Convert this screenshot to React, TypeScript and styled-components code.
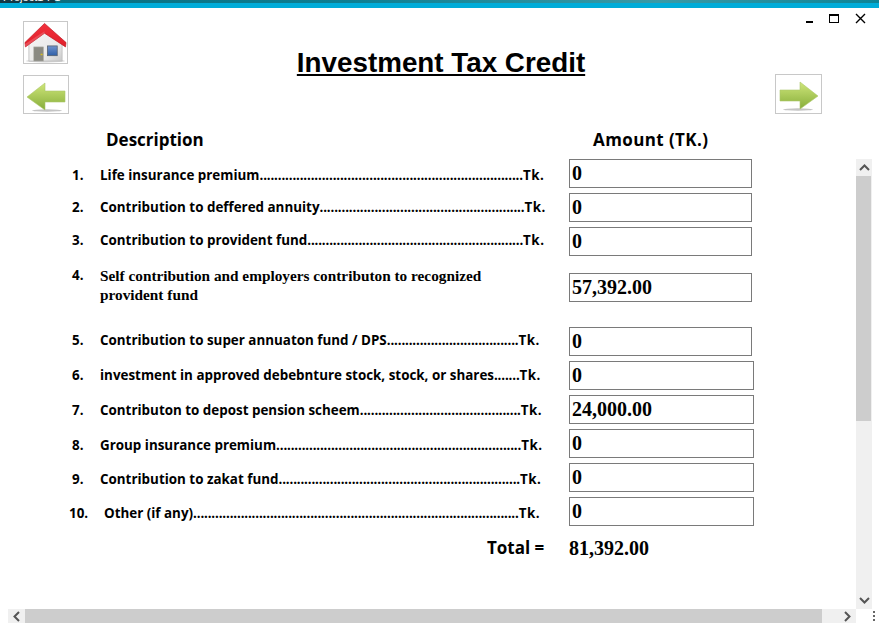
import React from "react";
import styled, { createGlobalStyle } from "styled-components";

interface IRow {
  no: string;
  label: string;
  dots: number;
  value: string;
  shift?: number;
  gap?: number;
  wide?: boolean;
}

const rows: IRow[] = [
  { no: "1.", label: "Life insurance premium", dots: 72, value: "0", shift: 2 },
  { no: "2.", label: "Contribution to deffered annuity", dots: 56, value: "0", shift: 0 },
  { no: "3.", label: "Contribution to provident fund", dots: 59, value: "0", shift: -1 },
  { no: "4.", label: "", dots: 0, value: "57,392.00", gap: 17, shift: -11.5 },
  { no: "5.", label: "Contribution to super annuaton fund / DPS", dots: 36, value: "0", gap: 25, shift: -1 },
  { no: "6.", label: "investment in approved debebnture stock, stock, or shares", dots: 7, value: "0", wide: true, shift: 0 },
  { no: "7.", label: "Contributon to depost pension scheem", dots: 44, value: "24,000.00", wide: true, shift: 1 },
  { no: "8.", label: "Group insurance premium", dots: 67, value: "0", wide: true, shift: 2 },
  { no: "9.", label: "Contribution to zakat fund", dots: 66, value: "0", wide: true, shift: 2 },
  { no: "10.", label: "Other (if any)", dots: 89, value: "0", wide: true, shift: 2 },
];

function HomeIcon() {
  return (
    <svg width="44" height="41" viewBox="0 0 44 41">
      <defs>
        <linearGradient id="wall" x1="0" y1="0" x2="1" y2="1">
          <stop offset="0" stopColor="#f6f6f6" />
          <stop offset="0.7" stopColor="#e8e8e8" />
          <stop offset="1" stopColor="#c8c8c8" />
        </linearGradient>
        <linearGradient id="roof" x1="0" y1="0" x2="0" y2="1">
          <stop offset="0" stopColor="#f2303c" />
          <stop offset="1" stopColor="#e0202a" />
        </linearGradient>
        <linearGradient id="pane" x1="0" y1="0" x2="0" y2="1">
          <stop offset="0" stopColor="#6f93cc" />
          <stop offset="1" stopColor="#2f5fa8" />
        </linearGradient>
      </defs>
      <ellipse cx="22" cy="39.5" rx="20" ry="1.4" fill="#d4d4d4" />
      <path d="M5 20 L21 8 L39 21 V39.5 H5 Z" fill="url(#wall)" stroke="#bdbdbd" strokeWidth="0.8" />
      <path d="M1 20.5 L21 1 L43 20.5 L42.5 25 L21 11 L1.5 25 Z" fill="url(#roof)" stroke="#bf1822" strokeWidth="0.7" />
      <path d="M1.5 25 L21 11 L21 9 L1 22 Z" fill="#f27c84" opacity="0.45" />
      <rect x="10" y="25" width="10" height="14.5" fill="#8a8a82" stroke="#b4b4ae" strokeWidth="0.6" />
      <rect x="17" y="32" width="2" height="1.5" fill="#d8c020" />
      <rect x="24" y="24" width="10" height="10" fill="url(#pane)" stroke="#55606e" strokeWidth="0.8" />
    </svg>
  );
}

function ArrowIcon({ flip }: { flip?: boolean }) {
  const id = flip ? "arrowR" : "arrowL";
  return (
    <svg width="40" height="34" viewBox="0 0 40 34">
      <defs>
        <linearGradient id={id} x1="0" y1="0" x2="0" y2="1">
          <stop offset="0" stopColor="#cfe67a" />
          <stop offset="1" stopColor="#86ad3a" />
        </linearGradient>
      </defs>
      <g transform={flip ? "matrix(-1 0 0 1 40 0)" : undefined}>
        <ellipse cx="21" cy="32.5" rx="15" ry="1.2" fill="#c4c4c4" />
        <path d="M1 19 L19 5 V13 H39 V24 H19 V32 Z" fill={`url(#${id})`} stroke="#acc86c" strokeWidth="0.6" />
      </g>
    </svg>
  );
}

export default function App() {
  return (
    <>
      <GlobalStyle />
      <Page>
        <TitleBar>
          <TitleText>Project1-P1</TitleText>
        </TitleBar>
        <Accent />
        <WindowButtons>
          <Minimize />
          <Maximize />
          <Close>
            <svg width="11" height="11" viewBox="0 0 11 11">
              <path d="M1 1 L10 10 M10 1 L1 10" stroke="#000" strokeWidth="1.4" fill="none" />
            </svg>
          </Close>
        </WindowButtons>

        <Header>
          <LeftTools>
            <HomeButton>
              <HomeIcon />
            </HomeButton>
            <BackButton>
              <ArrowIcon />
            </BackButton>
          </LeftTools>
          <Title>Investment Tax Credit</Title>
          <NextButton>
            <ArrowIcon flip />
          </NextButton>
        </Header>

        <ColumnHeads>
          <DescriptionHead>Description</DescriptionHead>
          <AmountHead>Amount (TK.)</AmountHead>
        </ColumnHeads>

        <Body>
          <Form>
            {rows.map((row) => (
              <Row key={row.no} $gap={row.gap || 0}>
                <Num $ten={row.no === "10."} $shift={row.shift || 0}>
                  {row.no}
                </Num>
                <LabelCell>
                  {row.label ? (
                    <Label $shift={row.shift || 0}>
                      {row.label}
                      <Dots>{".".repeat(row.dots)}</Dots>
                      <Unit>Tk.</Unit>
                    </Label>
                  ) : (
                    <SerifLabel>
                      Self contribution and employers contributon to recognized
                      provident fund
                    </SerifLabel>
                  )}
                </LabelCell>
                <Amount $wide={!!row.wide}>{row.value}</Amount>
              </Row>
            ))}
            <TotalRow>
              <TotalLabel>Total =</TotalLabel>
              <TotalValue>81,392.00</TotalValue>
            </TotalRow>
          </Form>
          <VScroll>
            <ScrollArrow>
              <svg width="11" height="7" viewBox="0 0 11 7">
                <path d="M1 6 L5.5 1.5 L10 6" stroke="#555" strokeWidth="2" fill="none" />
              </svg>
            </ScrollArrow>
            <VThumb />
            <ScrollArrow>
              <svg width="11" height="7" viewBox="0 0 11 7">
                <path d="M1 1 L5.5 5.5 L10 1" stroke="#555" strokeWidth="2" fill="none" />
              </svg>
            </ScrollArrow>
          </VScroll>
        </Body>

        <Bottom>
          <HScroll>
            <HArrow>
              <svg width="7" height="11" viewBox="0 0 7 11">
                <path d="M6 1 L1.5 5.5 L6 10" stroke="#555" strokeWidth="2" fill="none" />
              </svg>
            </HArrow>
            <HThumb />
            <HArrow>
              <svg width="7" height="11" viewBox="0 0 7 11">
                <path d="M1 1 L5.5 5.5 L1 10" stroke="#555" strokeWidth="2" fill="none" />
              </svg>
            </HArrow>
          </HScroll>
          <Grip>
            <i />
            <i />
            <i />
          </Grip>
        </Bottom>
      </Page>
    </>
  );
}

const GlobalStyle = createGlobalStyle`
  html, body {
    margin: 0;
    padding: 0;
    background: #fff;
  }
`;

const Page = styled.div`
  position: relative;
  display: flex;
  flex-direction: column;
  width: 879px;
  height: 623px;
  overflow: hidden;
  background: #fff;
  color: #000;
`;

const TitleBar = styled.div`
  height: 3px;
  overflow: hidden;
  background: linear-gradient(90deg, #123844 0, #123844 55px, #0a6f80 56px, #0d7f92 40%, #3a9aa6 75%, #0c8496);
`;

const TitleText = styled.div`
  margin: -10px 0 0 3px;
  font: 11px/14px "Liberation Sans", sans-serif;
  color: #fff;
`;

const Accent = styled.div`
  height: 5px;
  background: #00acd8;
`;

const WindowButtons = styled.div`
  position: absolute;
  top: 13px;
  right: 13px;
  display: flex;
  align-items: center;
  gap: 16px;
  height: 11px;
`;

const Minimize = styled.span`
  width: 7px;
  height: 2px;
  margin-top: 7px;
  background: #000;
`;

const Maximize = styled.span`
  box-sizing: border-box;
  width: 10px;
  height: 9px;
  border: 1px solid #000;
  border-top-width: 2px;
`;

const Close = styled.span`
  display: flex;
  width: 11px;
  height: 11px;
`;

const Header = styled.div`
  display: flex;
  align-items: flex-start;
  height: 120px;
  padding: 13px 57px 0 23px;
  box-sizing: border-box;
`;

const LeftTools = styled.div`
  display: flex;
  flex-direction: column;
  gap: 11px;
  width: 46px;
`;

const IconButton = styled.div`
  box-sizing: border-box;
  display: flex;
  align-items: center;
  justify-content: center;
  border: 1px solid #c8c8c8;
  background: #fff;
`;

const HomeButton = styled(IconButton)`
  width: 45px;
  height: 43px;
`;

const BackButton = styled(IconButton)`
  width: 46px;
  height: 39px;
`;

const NextButton = styled(IconButton)`
  width: 47px;
  height: 40px;
  margin-top: 53px;
`;

const Title = styled.h1`
  flex: 1;
  margin: 26px 0 0;
  padding-left: 38px;
  font: bold 27.8px/32px "Liberation Sans", Arial, sans-serif;
  text-align: center;
  text-decoration: underline;
`;

const ColumnHeads = styled.div`
  display: flex;
  height: 31px;
  font: 700 17px/24px "Open Sans", sans-serif;
`;

const DescriptionHead = styled.div`
  margin-left: 106px;
  width: 487px;
`;

const AmountHead = styled.div`
  letter-spacing: 0.4px;
`;

const Body = styled.div`
  display: flex;
  flex: 1;
  min-height: 0;
`;

const Form = styled.div`
  display: flex;
  flex-direction: column;
  flex: 1;
  gap: 5px;
  min-width: 0;
`;

const Row = styled.div<{ $gap: number }>`
  display: flex;
  align-items: center;
  height: 29px;
  margin-top: ${(p) => (p.$gap ? p.$gap - 5 : 0)}px;
`;

const Num = styled.div<{ $ten: boolean; $shift: number }>`
  flex: none;
  width: ${(p) => (p.$ten ? 35 : 28)}px;
  margin-left: ${(p) => (p.$ten ? 69 : 72)}px;
  margin-top: ${(p) => p.$shift * 2 - 2}px;
  font: 700 13.4px/16px "Open Sans", sans-serif;
`;

const LabelCell = styled.div`
  flex: 1;
  min-width: 0;
`;

const Label = styled.div<{ $shift: number }>`
  margin-top: ${(p) => p.$shift * 2 - 2}px;
  font: 700 13.4px/16px "Open Sans", sans-serif;
  white-space: nowrap;
`;

const Dots = styled.span`
  letter-spacing: -0.16px;
`;

const Unit = styled.span`
  letter-spacing: 0.5px;
`;

const SerifLabel = styled.div`
  width: 400px;
  margin-top: -6px;
  font: bold 15.3px/19px "Liberation Serif", serif;
`;

const Amount = styled.div<{ $wide: boolean }>`
  box-sizing: border-box;
  flex: none;
  width: ${(p) => (p.$wide ? 185 : 183)}px;
  margin-right: ${(p) => (p.$wide ? 102 : 104)}px;
  height: 29px;
  padding: 1px 2px;
  border: 1px solid #7a7a7a;
  font: bold 20px/24px "Liberation Serif", serif;
`;

const TotalRow = styled.div`
  display: flex;
  align-items: center;
  height: 24px;
  margin-top: 5px;
`;

const TotalLabel = styled.div`
  width: 82px;
  margin-left: 487px;
  font: 700 17px/24px "Open Sans", sans-serif;
`;

const TotalValue = styled.div`
  font: bold 20px/24px "Liberation Serif", serif;
`;

const VScroll = styled.div`
  display: flex;
  flex-direction: column;
  flex: none;
  justify-content: space-between;
  width: 16px;
  margin-right: 7px;
  background: #f0f0f0;
`;

const ScrollArrow = styled.div`
  display: flex;
  align-items: center;
  justify-content: center;
  height: 17px;
`;

const VThumb = styled.div`
  height: 245px;
  width: 15px;
  margin-bottom: auto;
  background: #cdcdcd;
`;

const Bottom = styled.div`
  display: flex;
  align-items: center;
  flex: none;
  height: 14px;
  padding-left: 8px;
`;

const HScroll = styled.div`
  display: flex;
  align-items: stretch;
  width: 848px;
  height: 14px;
  background: #f0f0f0;
`;

const HArrow = styled.div`
  display: flex;
  align-items: center;
  justify-content: center;
  width: 17px;
`;

const HThumb = styled.div`
  width: 797px;
  margin-right: auto;
  background: #cdcdcd;
`;

const Grip = styled.div`
  display: flex;
  flex-direction: column;
  gap: 2px;
  margin-left: 17px;

  i {
    display: block;
    width: 2px;
    height: 2px;
    background: #666;
  }
`;
